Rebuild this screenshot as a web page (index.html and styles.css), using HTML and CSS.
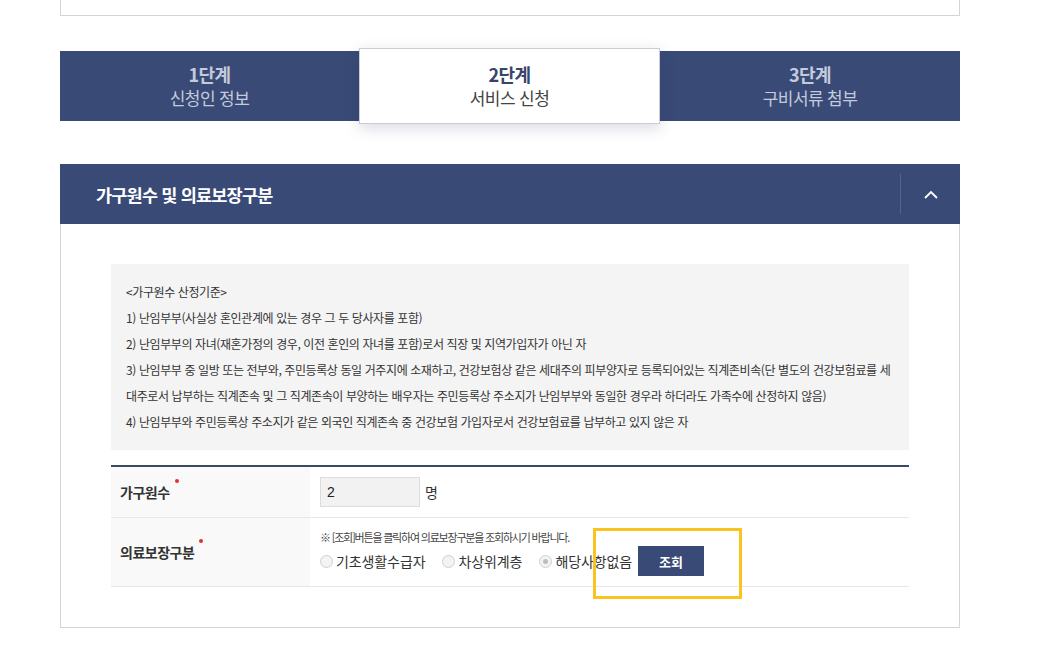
FILE: index.html
```html
<!DOCTYPE html>
<html lang="ko">
<head>
<meta charset="utf-8">
<link rel="stylesheet" href="styles.css">
</head>
<body>
<div class="wrap">
  <div class="topcard"></div>

  <div class="steps">
    <div class="step">
      <div class="step-no">1단계</div>
      <div class="step-name">신청인 정보</div>
    </div>
    <div class="step active">
      <div class="step-no">2단계</div>
      <div class="step-name">서비스 신청</div>
    </div>
    <div class="step">
      <div class="step-no">3단계</div>
      <div class="step-name">구비서류 첨부</div>
    </div>
  </div>

  <div class="section">
    <div class="sec-head">
      <h2 class="sec-title">가구원수 및 의료보장구분</h2>
      <button class="sec-toggle" type="button" aria-label="접기">
        <svg width="14" height="9" viewBox="0 0 14 9"><polyline points="1,8 7,2 13,8" fill="none" stroke="#fff" stroke-width="1.8"/></svg>
      </button>
    </div>
    <div class="sec-body">
      <div class="info">
        <p>&lt;가구원수 산정기준&gt;</p>
        <p>1) 난임부부(사실상 혼인관계에 있는 경우 그 두 당사자를 포함)</p>
        <p>2) 난임부부의 자녀(재혼가정의 경우, 이전 혼인의 자녀를 포함)로서 직장 및 지역가입자가 아닌 자</p>
        <p>3) 난임부부 중 일방 또는 전부와, 주민등록상 동일 거주지에 소재하고, 건강보험상 같은 세대주의 피부양자로 등록되어있는 직계존비속(단 별도의 건강보험료를 세<br>대주로서 납부하는 직계존속 및 그 직계존속이 부양하는 배우자는 주민등록상 주소지가 난임부부와 동일한 경우라 하더라도 가족수에 산정하지 않음)</p>
        <p>4) 난임부부와 주민등록상 주소지가 같은 외국인 직계존속 중 건강보험 가입자로서 건강보험료를 납부하고 있지 않은 자</p>
      </div>

      <div class="form">
        <div class="row row-count">
          <div class="label"><span class="req">가구원수</span></div>
          <div class="field">
            <input class="num" type="text" value="2">
            <span class="unit">명</span>
          </div>
        </div>
        <div class="row row-ins">
          <div class="label"><span class="req">의료보장구분</span></div>
          <div class="field field-col">
            <div class="note">※ [조회]버튼을 클릭하여 의료보장구분을 조회하시기 바랍니다.</div>
            <div class="radios">
              <label class="radio"><span class="dot"></span>기초생활수급자</label>
              <label class="radio"><span class="dot"></span>차상위계층</label>
              <label class="radio"><span class="dot on"></span>해당사항없음</label>
              <button class="btn" type="button">조회</button>
            </div>
          </div>
        </div>
      </div>
      <div class="highlight"></div>
    </div>
  </div>
</div>
</body>
</html>
```

FILE: styles.css
```css
* { box-sizing: border-box; }
body {
  margin: 0;
  background: #fff;
  font-family: "Noto Sans CJK KR", "Noto Sans", sans-serif;
  color: #333;
}
.wrap {
  width: 900px;
  margin-left: 60px;
}
.topcard {
  height: 16px;
  border: 1px solid #d5d5d5;
  border-top: none;
}

/* steps */
.steps {
  margin-top: 35px;
  display: grid;
  grid-template-columns: 299px 301px 300px;
  height: 70px;
  background: #394a76;
}
.step {
  display: flex;
  flex-direction: column;
  align-items: center;
  justify-content: center;
  color: #c3cbdc;
  padding-bottom: 1px;
}
.step-no {
  font-size: 18px;
  font-weight: 700;
  line-height: 24px;
  letter-spacing: -0.5px;
}
.step-name {
  font-size: 17px;
  line-height: 24px;
  letter-spacing: -0.6px;
}
.step.active {
  margin: -3px 0 -3px 0;
  background: #fff;
  border: 1px solid #c9cdd8;
  box-shadow: 0 4px 14px rgba(40, 50, 90, 0.18);
  position: relative;
  z-index: 1;
  color: #444;
}
.step.active .step-no { color: #38456b; }

/* section */
.section {
  margin-top: 43px;
}
.sec-head {
  height: 60px;
  background: #394a76;
  display: flex;
  align-items: center;
  justify-content: space-between;
  padding-left: 36px;
}
.sec-title {
  margin: 0;
  font-size: 17.5px;
  font-weight: 700;
  color: #fff;
  letter-spacing: -0.8px;
}
.sec-toggle {
  width: 60px;
  height: 40px;
  border: none;
  border-left: 1px solid #56648c;
  background: transparent;
  display: flex;
  align-items: center;
  justify-content: center;
  padding: 0;
}
.sec-body {
  position: relative;
  border: 1px solid #d5d5d5;
  border-top: none;
  padding: 40px 50px 40px 50px;
}
.info {
  background: #f4f4f4;
  padding: 15px 15px 15px 15px;
  height: 186px;
}
.info p {
  margin: 0;
  font-size: 12px;
  line-height: 26px;
  letter-spacing: -0.4px;
  color: #333;
  white-space: nowrap;
}

/* form */
.form {
  margin-top: 15px;
  border-top: 2px solid #394a63;
}
.row {
  display: flex;
  border-bottom: 1px solid #e8e8e8;
}
.row-count { height: 51px; }
.row-ins { height: 69px; }
.label {
  width: 199px;
  background: #f9f9f9;
  display: flex;
  align-items: center;
  padding-left: 9px;
  font-size: 14px;
  font-weight: 700;
  color: #333;
  letter-spacing: -0.5px;
}
.req { position: relative; }
.req::after {
  content: "";
  position: absolute;
  right: -9px;
  top: -3px;
  width: 4px;
  height: 4px;
  border-radius: 50%;
  background: #e2312d;
}
.field {
  flex: 1;
  display: flex;
  align-items: center;
  padding-left: 10px;
}
.num {
  width: 100px;
  height: 30px;
  border: 1px solid #dcdcdc;
  background: #f2f2f2;
  font-family: "Liberation Sans", sans-serif;
  font-size: 14px;
  padding: 0 6px;
  color: #222;
}
.unit {
  margin-left: 5px;
  font-size: 14px;
}
.field-col {
  flex-direction: column;
  align-items: flex-start;
  justify-content: center;
  padding-top: 1px;
}
.note {
  font-size: 11px;
  letter-spacing: -1.2px;
  color: #444;
  line-height: 16px;
}
.radios {
  display: flex;
  align-items: center;
  margin-top: 1px;
}
.radio {
  display: flex;
  align-items: center;
  font-size: 14px;
  color: #333;
  margin-right: 17px;
  letter-spacing: -0.1px;
}
.radio:nth-child(3) { margin-right: 6px; }
.dot {
  width: 13px;
  height: 13px;
  border-radius: 50%;
  border: 1px solid #cfcfcf;
  background: #f3f3f3;
  margin-right: 3px;
  position: relative;
}
.dot.on::after {
  content: "";
  position: absolute;
  left: 3px;
  top: 3px;
  width: 5px;
  height: 5px;
  border-radius: 50%;
  background: #bdbdbd;
}
.btn {
  width: 66px;
  height: 30px;
  border: none;
  background: #394a76;
  color: #fff;
  font-family: inherit;
  font-size: 13px;
  font-weight: 700;
  padding: 0;
}

.highlight {
  position: absolute;
  left: 532px;
  top: 304px;
  width: 149px;
  height: 71px;
  border: 3px solid #fac31f;
}
```
